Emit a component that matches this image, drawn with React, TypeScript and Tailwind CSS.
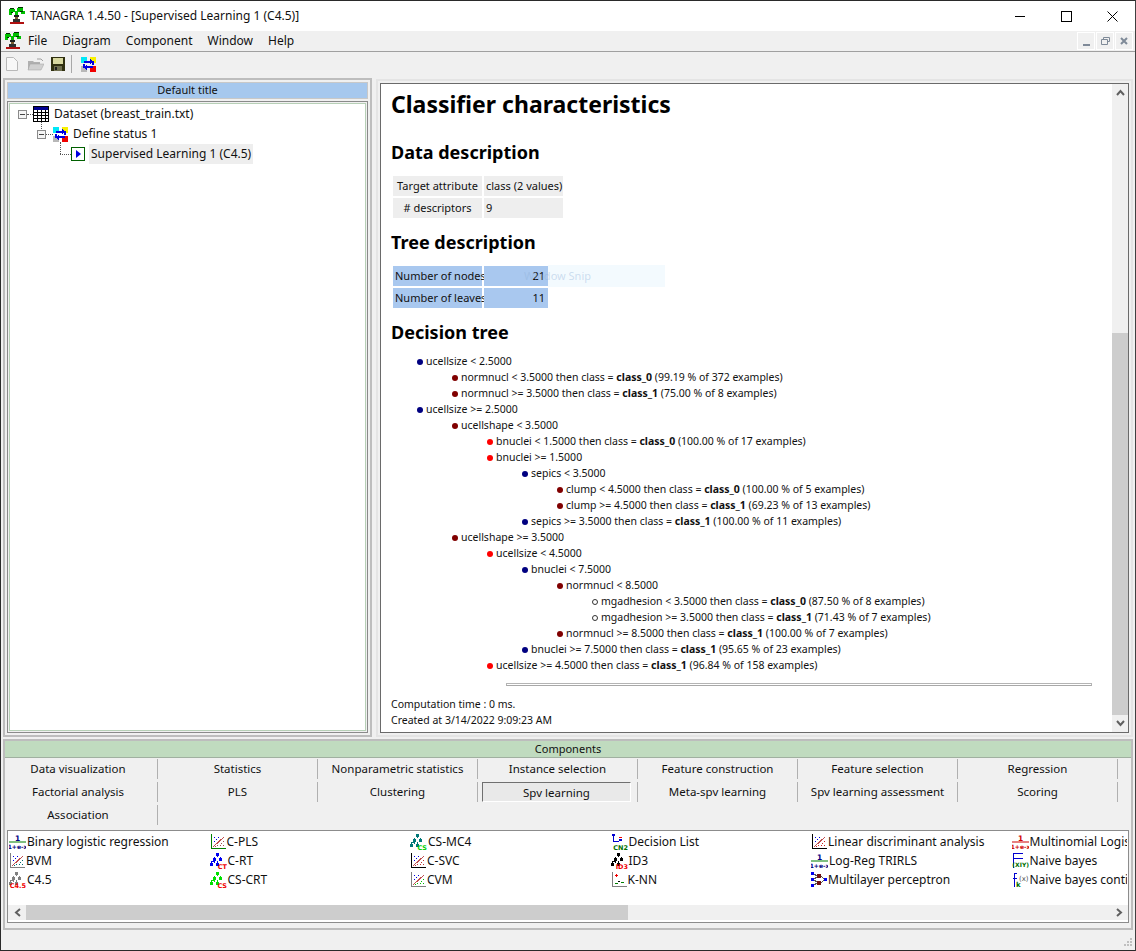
const font = "[font-family:'Noto_Sans',sans-serif]";

const PalmIcon = ({ className }: { className: string }) => (
  <svg viewBox="0 0 16 18" className={className} shapeRendering="crispEdges">
    <rect x="6" y="7" width="3" height="8" fill="#7a5a30" />
    <path d="M0 2h6v2h2V1h6v3h2v3h-4V5H9v3H6V5H3v3H0z" fill="#00c000" />
    <path d="M1 1h4v1H1zM9 0h5v1H9zM2 5h2v1H2zM11 4h3v1h-3z" fill="#003000" />
    <rect x="5" y="8" width="5" height="2" fill="#202020" />
    <rect x="1" y="15" width="14" height="2" fill="#b01010" />
    <rect x="4" y="12" width="7" height="3" fill="#303030" />
  </svg>
);

const StatusIcon = ({ className }: { className: string }) => (
  <svg viewBox="0 0 16 16" className={className} shapeRendering="crispEdges">
    <rect x="0" y="0" width="6" height="6" fill="#00e8f8" />
    <rect x="10" y="0" width="6" height="6" fill="#f8f000" />
    <rect x="0" y="10" width="6" height="6" fill="#b8b8b8" />
    <rect x="10" y="10" width="6" height="6" fill="#f00000" />
    <path d="M3 4h7V2l3 3-3 3V6H3zM13 12H6v2l-3-3 3-3v2h7z" fill="#0000e0" />
    <path d="M2 7h2v5H2zM12 4h2v5h-2z" fill="#0000e0" />
  </svg>
);

const TableIcon = () => (
  <svg viewBox="0 0 16 16" className="w-4 h-4" shapeRendering="crispEdges">
    <rect x="0.5" y="0.5" width="15" height="15" fill="#fff" stroke="#000" />
    <rect x="1" y="1" width="14" height="3" fill="#000090" />
    <path d="M1 6.500h14M1 9.500h14M1 12.500h14M4.500 4v11M8.500 4v11M12.500 4v11" stroke="#000" />
  </svg>
);

const Expander = () => (
  <span className="w-[9px] h-[9px] border border-[#8a8a8a] bg-[#f4f4f4] flex items-center justify-center shrink-0">
    <span className="w-[5px] h-px bg-[#444]" />
  </span>
);

const Dots = ({ className }: { className: string }) => (
  <span className={`border-b border-dotted border-[#555] ${className}`} />
);

type IconKind = "logit" | "scatter" | "tree" | "list" | "knn" | "mlp" | "bayes" | "bayesc";

const tinyFont = "'DejaVu Sans',sans-serif";

const ListIcon = ({ kind, color = "#0000d0", tag = "", tagColor = "#f00000" }: { kind: IconKind; color?: string; tag?: string; tagColor?: string }) => {
  if (kind === "logit") {
    return (
      <svg viewBox="0 0 17 16" className="w-[17px] h-4 shrink-0">
        <text x="8.500" y="6.500" textAnchor="middle" fontFamily={tinyFont} fontSize="7.500" fontWeight="700" fill={color}>1</text>
        <rect x="0" y="7.500" width="17" height="1" fill={tagColor} />
        <text x="8.500" y="15" textAnchor="middle" fontFamily={tinyFont} fontSize="6" fontWeight="700" fill={color}>1+e-x</text>
      </svg>
    );
  }
  if (kind === "scatter") {
    return (
      <svg viewBox="0 0 16 16" className="w-4 h-4 shrink-0" shapeRendering="crispEdges">
        <path d="M1 0h1v14h14v1H1z" fill={color} />
        <path d="M4 3h1v1H4zM6 5h1v1H6zM8 3h1v1H8zM4 7h1v1H4zM7 8h1v1H7zM10 5h1v1h-1z" fill="#0000e0" />
        <path d="M9 7h1v1H9zM11 9h1v1h-1zM13 7h1v1h-1zM7 11h1v1H7zM10 11h1v1h-1zM13 11h1v1h-1zM5 12h1v1H5z" fill={tagColor} />
        <path d="M3 13L14 3" stroke="#c05050" strokeWidth="1" />
      </svg>
    );
  }
  if (kind === "tree") {
    return (
      <svg viewBox="0 0 17 16" className="w-[17px] h-4 shrink-0" shapeRendering="crispEdges">
        <path d="M6 0h3v3H6zM3 5h3v3H3zM9 5h3v3H9zM0 10h3v3H0zM6 10h3v3H6z" fill={color} />
        <path d="M7 3h1v1h3v1h-1V4H5v1H4V4h3zM1 8h4v2H4V9H2v1H1zM7 8h1v2H7z" fill={color} />
        <text x="17" y="16" textAnchor="end" fontFamily={tinyFont} fontSize="6.500" fontWeight="700" fill={tagColor}>{tag}</text>
      </svg>
    );
  }
  if (kind === "list") {
    return (
      <svg viewBox="0 0 17 16" className="w-[17px] h-4 shrink-0" shapeRendering="crispEdges">
        <path d="M1 0h3v2H1zM8 5h3v2H8z" fill="#0000d0" />
        <path d="M2 2h1v5h5v1H2z" fill="#0000d0" />
        <path d="M8 3h3v1H8z" fill="#f00000" />
        <text x="17" y="16" textAnchor="end" fontFamily={tinyFont} fontSize="6.500" fontWeight="700" fill="#007000">CN2</text>
      </svg>
    );
  }
  if (kind === "knn") {
    return (
      <svg viewBox="0 0 16 16" className="w-4 h-4 shrink-0" shapeRendering="crispEdges">
        <path d="M1 0h1v14h14v1H1z" fill="#808080" />
        <path d="M4 3h3v1H4zM5 2h1v3H5z" fill="#f00000" />
        <path d="M7 9h2v1H7z" fill="#000" />
        <path d="M4 11h3v1H4zM10 10h3v1h-3z" fill="#008000" />
      </svg>
    );
  }
  if (kind === "mlp") {
    return (
      <svg viewBox="0 0 16 16" className="w-4 h-4 shrink-0" shapeRendering="crispEdges">
        <path d="M0 0h3v3H0zM0 6h3v3H0zM0 12h3v3H0zM13 6h3v3h-3z" fill="#0000f0" />
        <path d="M6 2h4v4H6zM6 9h4v4H6z" fill="#701010" />
        <path d="M3 2l3 2M3 7l3-2M3 8l3 2M3 13l3-2M10 4l3 3M10 11l3-3" stroke="#555" />
      </svg>
    );
  }
  if (kind === "bayes") {
    return (
      <svg viewBox="0 0 17 16" className="w-[17px] h-4 shrink-0" shapeRendering="crispEdges">
        <path d="M1 0h10v1H2v14H1zM2 5h9v1H2z" fill="#0000d0" />
        <text x="17" y="14" textAnchor="end" fontFamily={tinyFont} fontSize="6" fontWeight="700" fill="#007000">(XIY)</text>
      </svg>
    );
  }
  return (
    <svg viewBox="0 0 17 16" className="w-[17px] h-4 shrink-0">
      <path d="M2 1h3v1H3v13H2zM1 6h4v1H1z" fill="#0000d0" />
      <text x="4" y="15" fontFamily={tinyFont} fontSize="7" fontWeight="700" fill="#007000">k</text>
      <text x="7" y="9" fontFamily={tinyFont} fontSize="7" fill="#505050">(x)</text>
    </svg>
  );
};

type Comp = { label: string; kind: IconKind; color?: string; tag?: string; tagColor?: string };

const columns: Comp[][] = [
  [
    { label: "Binary logistic regression", kind: "logit", color: "#000080", tagColor: "#008000" },
    { label: "BVM", kind: "scatter", color: "#808080", tagColor: "#007070" },
    { label: "C4.5", kind: "tree", color: "#808080", tag: "C4.5" },
  ],
  [
    { label: "C-PLS", kind: "scatter", color: "#008000", tagColor: "#a05050" },
    { label: "C-RT", kind: "tree", color: "#0000f0", tag: "CT" },
    { label: "CS-CRT", kind: "tree", color: "#00e000", tag: "CS" },
  ],
  [
    { label: "CS-MC4", kind: "tree", color: "#007878", tag: "CS", tagColor: "#00d000" },
    { label: "C-SVC", kind: "scatter", color: "#000000", tagColor: "#c03030" },
    { label: "CVM", kind: "scatter", color: "#808080", tagColor: "#00c000" },
  ],
  [
    { label: "Decision List", kind: "list" },
    { label: "ID3", kind: "tree", color: "#000000", tag: "ID3" },
    { label: "K-NN", kind: "knn" },
  ],
  [
    { label: "Linear discriminant analysis", kind: "scatter", color: "#000000", tagColor: "#d02020" },
    { label: "Log-Reg TRIRLS", kind: "logit", color: "#000080", tagColor: "#008000" },
    { label: "Multilayer perceptron", kind: "mlp" },
  ],
  [
    { label: "Multinomial Logistic Regression", kind: "logit", color: "#d00000", tagColor: "#d00000" },
    { label: "Naive bayes", kind: "bayes" },
    { label: "Naive bayes continuous", kind: "bayesc" },
  ],
];

const tabRows = [
  ["Data visualization", "Statistics", "Nonparametric statistics", "Instance selection", "Feature construction", "Feature selection", "Regression"],
  ["Factorial analysis", "PLS", "Clustering", "Spv learning", "Meta-spv learning", "Spv learning assessment", "Scoring"],
  ["Association"],
];

type Rule = { depth: number; dot: string; text: string; cls?: string; tail?: string };

const navy = "bg-[#000080]";
const maroon = "bg-[#800000]";
const red = "bg-[#ff0000]";
const hollow = "bg-white border border-[#333]";

const rules: Rule[] = [
  { depth: 0, dot: navy, text: "ucellsize < 2.5000" },
  { depth: 1, dot: maroon, text: "normnucl < 3.5000 then class = ", cls: "class_0", tail: " (99.19 % of 372 examples)" },
  { depth: 1, dot: maroon, text: "normnucl >= 3.5000 then class = ", cls: "class_1", tail: " (75.00 % of 8 examples)" },
  { depth: 0, dot: navy, text: "ucellsize >= 2.5000" },
  { depth: 1, dot: maroon, text: "ucellshape < 3.5000" },
  { depth: 2, dot: red, text: "bnuclei < 1.5000 then class = ", cls: "class_0", tail: " (100.00 % of 17 examples)" },
  { depth: 2, dot: red, text: "bnuclei >= 1.5000" },
  { depth: 3, dot: navy, text: "sepics < 3.5000" },
  { depth: 4, dot: maroon, text: "clump < 4.5000 then class = ", cls: "class_0", tail: " (100.00 % of 5 examples)" },
  { depth: 4, dot: maroon, text: "clump >= 4.5000 then class = ", cls: "class_1", tail: " (69.23 % of 13 examples)" },
  { depth: 3, dot: navy, text: "sepics >= 3.5000 then class = ", cls: "class_1", tail: " (100.00 % of 11 examples)" },
  { depth: 1, dot: maroon, text: "ucellshape >= 3.5000" },
  { depth: 2, dot: red, text: "ucellsize < 4.5000" },
  { depth: 3, dot: navy, text: "bnuclei < 7.5000" },
  { depth: 4, dot: maroon, text: "normnucl < 8.5000" },
  { depth: 5, dot: hollow, text: "mgadhesion < 3.5000 then class = ", cls: "class_0", tail: " (87.50 % of 8 examples)" },
  { depth: 5, dot: hollow, text: "mgadhesion >= 3.5000 then class = ", cls: "class_1", tail: " (71.43 % of 7 examples)" },
  { depth: 4, dot: maroon, text: "normnucl >= 8.5000 then class = ", cls: "class_1", tail: " (100.00 % of 7 examples)" },
  { depth: 3, dot: navy, text: "bnuclei >= 7.5000 then class = ", cls: "class_1", tail: " (95.65 % of 23 examples)" },
  { depth: 2, dot: red, text: "ucellsize >= 4.5000 then class = ", cls: "class_1", tail: " (96.84 % of 158 examples)" },
];

const depthPad = ["pl-[26px]", "pl-[61px]", "pl-[96px]", "pl-[131px]", "pl-[166px]", "pl-[201px]"];

const Chevron = ({ d, className = "" }: { d: string; className?: string }) => (
  <svg viewBox="0 0 9 7" className={`w-[9px] h-[7px] ${className}`}>
    <path d={d} fill="none" stroke="#606060" strokeWidth="2" />
  </svg>
);

const Cell = ({ children, className }: { children: React.ReactNode; className: string }) => (
  <div className={`h-5 flex items-center px-0.5 text-[11px] whitespace-nowrap ${className}`}>{children}</div>
);

export default function App() {
  return (
    <div className={`w-[1136px] h-[951px] flex flex-col border border-[#2a2a2a] border-r-[#404040] bg-[#f0f0f0] overflow-hidden text-black ${font}`}>
      {/* window title */}
      <div className="h-[30px] shrink-0 bg-white flex items-center pl-2">
        <PalmIcon className="w-4 h-[18px] mr-[5px]" />
        <span className="text-xs text-[#111]">TANAGRA 1.4.50 - [Supervised Learning 1 (C4.5)]</span>
        <div className="ml-auto flex items-center">
          <div className="w-[46px] flex justify-center"><span className="w-[10px] h-px bg-black" /></div>
          <div className="w-[46px] flex justify-center"><span className="w-[11px] h-[11px] border border-black" /></div>
          <div className="w-[46px] flex justify-center">
            <svg viewBox="0 0 11 11" className="w-[11px] h-[11px]"><path d="M.5.500l10 10M10.500.500l-10 10" stroke="#000" fill="none" /></svg>
          </div>
        </div>
      </div>

      {/* menu */}
      <div className="h-[21px] shrink-0 flex items-center border-b border-[#a0a0a0] pl-1 relative">
        <PalmIcon className="w-4 h-[18px] mr-[7px]" />
        <div className="flex items-center gap-[15px] text-[12px] text-[#111]">
          <span>File</span>
          <span>Diagram</span>
          <span>Component</span>
          <span>Window</span>
          <span>Help</span>
        </div>
        <div className="ml-auto flex gap-px pr-0.5">
          <div className="w-[18px] h-[18px] border border-white flex items-end justify-center pb-[3px]"><span className="w-[7px] h-0.5 bg-[#7f8a98]" /></div>
          <div className="w-[18px] h-[18px] border border-white flex items-center justify-center text-[#7f8a98]"><svg viewBox="0 0 9 8" className="w-[9px] h-2"><path d="M2.500 2V.5h6v4H7M.5 2.500h6v5h-6z" fill="none" stroke="currentColor" /></svg></div>
          <div className="w-[18px] h-[18px] border border-white flex items-center justify-center">
            <svg viewBox="0 0 8 8" className="w-2 h-2"><path d="M1 1l6 6M7 1L1 7" stroke="#7f8a98" strokeWidth="2" fill="none" /></svg>
          </div>
        </div>
      </div>

      {/* toolbar */}
      <div className="h-[26px] shrink-0 flex items-center pl-[5px] pb-0.5">
        <svg viewBox="0 0 12 14" className="w-3 h-3.5 mr-[9px]"><path d="M.5.500h7l4 4v9H.5z" fill="#f8f8f8" stroke="#b8b8b8" /></svg>
        <svg viewBox="0 0 17 14" className="w-[17px] h-3.5 mr-[7px]"><path d="M1 4h5l1 1h6v8H1z" fill="#b0b0b0" /><path d="M3 7h14l-3 6H1z" fill="#d0d0d0" stroke="#a0a0a0" strokeWidth=".5" /><path d="M10 2h4l2 2" fill="none" stroke="#a0a0a0" /></svg>
        <svg viewBox="0 0 14 14" className="w-3.5 h-3.5" shapeRendering="crispEdges"><rect width="14" height="14" fill="#303010" /><rect x="2" y="1" width="10" height="6" fill="#d8d8a0" /><rect x="3" y="9" width="8" height="5" fill="#707050" /><rect x="4" y="10" width="2" height="3" fill="#202020" /></svg>
        <span className="w-px h-[18px] bg-[#a8a8a8] ml-[6px] mr-[9px]" />
        <StatusIcon className="w-[15px] h-[15px]" />
      </div>

      {/* main panes */}
      <div className="h-[660px] shrink-0 flex pl-[2px]">
        <div className="w-[369px] h-[659px] shrink-0 border-2 border-[#bdbdbd] p-[2px] flex flex-col gap-[2px]">
          <div className="h-[17px] shrink-0 bg-[#a6c8ee] border border-[#c8c8c8] text-[11px] text-[#111] flex items-center justify-center">Default title</div>
          <div className="flex-1 border border-[#8a8a8a] p-[1px]">
            <div className="h-full border border-[#b7d0b7] bg-white pl-[8px] text-[12px] text-[#111]">
              <div className="h-5 flex items-center">
                <Expander />
                <Dots className="w-[6px]" />
                <TableIcon />
                <span className="ml-[5px]">Dataset (breast_train.txt)</span>
              </div>
              <div className="h-5 flex items-center pl-[19px] relative">
                <span className="absolute left-[23px] top-[-2px] h-[7px] border-l border-dotted border-[#555]" />
                <Expander />
                <Dots className="w-[7px]" />
                <StatusIcon className="w-[15px] h-[15px]" />
                <span className="ml-[5px]">Define status 1</span>
              </div>
              <div className="h-5 flex items-center pl-[42px] relative">
                <span className="absolute left-[42px] top-[-2px] h-[12px] border-l border-dotted border-[#555]" />
                <Dots className="w-[11px]" />
                <span className="w-[14px] h-[14px] border border-[#006000] bg-white flex items-center justify-center">
                  <span className="w-0 h-0 border-y-[4px] border-y-transparent border-l-[5px] border-l-[#0000e0]" />
                </span>
                <span className="ml-[4px] h-5 px-[2px] bg-[#eeeeee] flex items-center">Supervised Learning 1 (C4.5)</span>
              </div>
            </div>
          </div>
        </div>

        <div className="w-[4px] shrink-0" />

        <div className="w-[757px] h-[658px] shrink-0 mt-px border-2 border-[#e4e4e4] p-[2px]">
          <div className="h-full border border-[#6a6a6a] flex bg-white">
            <div className="flex-1 min-w-0 pl-[10px] pr-[20px] flex flex-col">
              <h1 className="text-[23px] leading-[28px] font-bold mt-[6px]">Classifier characteristics</h1>
              <h2 className="text-[18px] leading-6 font-bold mt-[22px]">Data description</h2>
              <div className="mt-[12px] ml-[2px] grid grid-cols-[89px_79px] gap-x-[2px] gap-y-[2px] text-[#111]">
                <Cell className="bg-[#eeeeee] justify-center">Target attribute</Cell>
                <Cell className="bg-[#eeeeee]">class (2 values)</Cell>
                <Cell className="bg-[#eeeeee] justify-center">#&nbsp;descriptors</Cell>
                <Cell className="bg-[#eeeeee]">9</Cell>
              </div>
              <h2 className="text-[18px] leading-6 font-bold mt-[12px]">Tree description</h2>
              <div className="mt-[12px] ml-[2px] grid grid-cols-[89px_64px] gap-x-[2px] gap-y-[2px] text-[#111] relative">
                <Cell className="bg-[#a9c8ef]">Number of nodes</Cell>
                <Cell className="bg-[#a9c8ef] justify-end pr-[3px]">21</Cell>
                <Cell className="bg-[#a9c8ef]">Number of leaves</Cell>
                <Cell className="bg-[#a9c8ef] justify-end pr-[3px]">11</Cell>
                {/* snip tool ghost label over the table */}
                <div className="absolute left-[155px] top-[-1px] w-[117px] h-[22px] bg-[#f3fafe]" />
                <div className="absolute left-[131px] top-[-1px] h-[22px] text-[11px] text-[#8fb0d8]/40 flex items-center">Window Snip</div>
              </div>
              <h2 className="text-[18px] leading-6 font-bold mt-[12px]">Decision tree</h2>
              <div className="mt-[10px] text-[10.500px] text-[#111]">
                {rules.map((r) => (
                  <div key={r.text} className={`h-4 flex items-center whitespace-pre ${depthPad[r.depth]}`}>
                    <span className={`w-[6px] h-[6px] rounded-full mr-[3px] shrink-0 ${r.dot}`} />
                    <span>{r.text}</span>
                    {r.cls && <b>{r.cls}</b>}
                    {r.tail && <span>{r.tail}</span>}
                  </div>
                ))}
              </div>
              <div className="mt-[9px] ml-[115px] mr-0 h-[3px] border border-[#b4b4b4] border-b-[#a8a8a8]" />
              <div className="mt-[10px] text-[10.500px] text-[#111] leading-4">
                <div>Computation time : 0 ms.</div>
                <div>Created at 3/14/2022 9:09:23 AM</div>
              </div>
            </div>
            <div className="w-[16px] shrink-0 bg-[#f0f0f0] flex flex-col">
              <div className="h-[17px] flex items-center justify-center"><Chevron d="M1 6l3.500-4 3.500 4" /></div>
              <div className="h-[232px]" />
              <div className="flex-1 bg-[#cdcdcd]" />
              <div className="h-[17px] flex items-center justify-center"><Chevron d="M1 1l3.500 4 3.500-4" /></div>
            </div>
          </div>
        </div>
      </div>

      {/* components palette */}
      <div className="mt-[1px] mx-[2px] h-[191px] shrink-0 border-2 border-[#bdbdbd] flex flex-col">
        <div className="h-[17px] shrink-0 bg-[#c0dbbf] border-b border-[#a0b0a0] text-[11px] text-[#111] flex items-center justify-center">Components</div>
        <div className="h-[70px] shrink-0 pt-[1px] text-[11.500px] text-[#111]">
          {tabRows.map((row) => (
            <div key={row[0]} className="h-[23px] flex">
              {row.map((t) => (
                <div key={t} className="w-[160px] shrink-0 h-[20px] first:w-[153px] first:pr-[6px] border-r border-[#b0b0b0] flex items-center justify-center">
                  {t === "Spv learning" ? (
                    <span className="w-[149px] h-[20px] ml-[-2px] border border-t-[#707070] border-l-[#707070] border-b-white border-r-white bg-[#e9e9e9] flex items-center justify-center pt-[2px]">{t}</span>
                  ) : t}
                </div>
              ))}
            </div>
          ))}
        </div>
        <div className="mt-[2px] mx-[2px] h-[93px] border border-[#8c8c8c] bg-white flex flex-col">
          <div className="flex-1 overflow-hidden flex pl-[1px] pt-[1px]">
            {columns.map((col) => (
              <div key={col[0].label} className="w-[200.500px] shrink-0 last:w-[115px] overflow-hidden">
                {col.map((c) => (
                  <div key={c.label} className="h-[19px] flex items-center gap-px text-[12px] text-[#111] whitespace-nowrap">
                    <ListIcon kind={c.kind} color={c.color} tag={c.tag} tagColor={c.tagColor} />
                    <span>{c.label}</span>
                  </div>
                ))}
              </div>
            ))}
          </div>
          <div className="h-[15px] shrink-0 mb-[2px] bg-[#f0f0f0] flex">
            <div className="w-[18px] flex items-center justify-center"><svg viewBox="0 0 7 9" className="w-[7px] h-[9px]"><path d="M6 1L2 4.500 6 8" fill="none" stroke="#606060" strokeWidth="2" /></svg></div>
            <div className="w-[602px] bg-[#cdcdcd]" />
            <div className="ml-auto w-[18px] flex items-center justify-center"><svg viewBox="0 0 7 9" className="w-[7px] h-[9px]"><path d="M1 1l4 3.500L1 8" fill="none" stroke="#606060" strokeWidth="2" /></svg></div>
          </div>
        </div>
      </div>

      {/* status bar */}
      <div className="flex-1 flex items-end justify-end pr-[3px] pb-[3px]">
        <svg viewBox="0 0 9 9" className="w-[9px] h-[9px]" shapeRendering="crispEdges"><path d="M7 0h2v2H7zM4 3h2v2H4zM7 3h2v2H7zM1 6h2v2H1zM4 6h2v2H4zM7 6h2v2H7z" fill="#c0c0c0" /></svg>
      </div>
    </div>
  );
}
